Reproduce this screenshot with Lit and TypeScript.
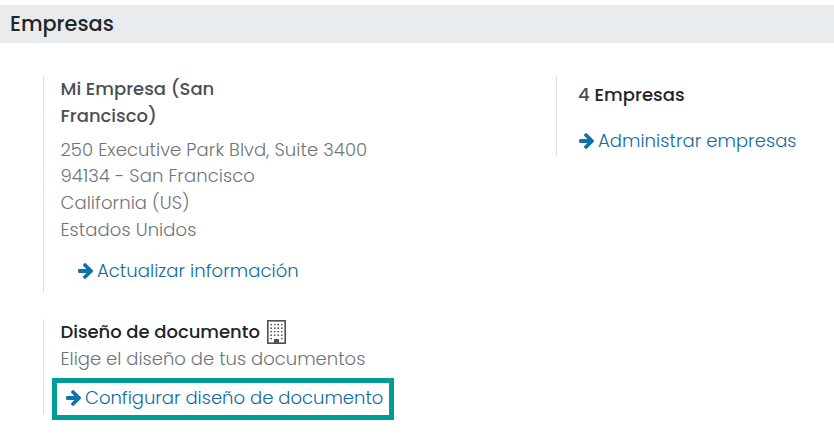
import { LitElement, html, css } from "lit";

const arrow = html`<svg class="arrow" viewBox="64 53 1472 1558" preserveAspectRatio="none" aria-hidden="true">
  <path d="M1536 832q0 53-37 90l-651 652q-39 37-91 37-51 0-90-37l-75-75q-38-38-38-91t38-91l293-293H181q-52 0-84.500-37.500T64 896V768q0-53 32.500-90.500T181 640h704L592 346q-38-36-38-90t38-90l75-75q38-38 90-38 53 0 91 38l651 651q37 35 37 90z"/>
</svg>`;

const columns = [3.2, 6.7, 10.2, 13.7];
const rows = [3.8, 7.3, 10.8, 14.3, 17.8];

const building = html`<svg class="building" viewBox="0 0 19 24" aria-hidden="true">
  <rect x="0.800" y="0.800" width="17.400" height="22.400" fill="none" stroke="#495057" stroke-width="1.600"/>
  ${rows.map((y, r) => columns.map((x, c) => r === 4 && (c === 1 || c === 2) ? "" : html`<svg x=${x} y=${y} width="2" height="2"><rect width="2" height="1.600" fill="#495057"/></svg>`))}
  <path d="M7 24v-5h5v5z" fill="#495057"/>
</svg>`;

class AppRoot extends LitElement {
  static styles = css`
    :host {
      display: block;
      height: 438px;
      overflow: hidden;
      background: #fff;
      color: #6f757b;
      font: 300 18px/26.8px Poppins, "Open Sans", sans-serif;
      white-space: nowrap;
    }
    h2, h3, p { margin: 0; font-size: inherit; font-weight: inherit; }
    h2 {
      height: 38px;
      margin-top: 5px;
      padding-left: 10px;
      box-sizing: border-box;
      background: #e9ecef;
      color: #212529;
      font-size: 20.8px;
      font-weight: 500;
      line-height: 38px;
    }
    .grid {
      display: grid;
      grid-template-columns: 513px 1fr;
      padding: 33px 0 0 43px;
      align-items: start;
    }
    .left { display: grid; gap: 26px; }
    .box { border-left: 1px solid #dee2e6; box-sizing: border-box; }
    .company { height: 217px; padding-left: 16.500px; }
    .document { height: 95px; padding-left: 16.500px; }
    .manage { height: 80px; padding: 6px 0 0 21px; }
    h3 { color: #212529; font-size: 18px; font-weight: 500; }
    .name { color: #495057; }
    .count { color: #495057; }
    .amount { letter-spacing: 0.06px; }
    .address { margin-top: 7px; letter-spacing: 0.07px; }
    .link { display: flex; align-items: center; gap: 4px; color: #106ba3; }
    .update { margin: 14px 0 0 17.500px; letter-spacing: 0.05px; }
    .admin { margin: 19px 0 0 1px; letter-spacing: 0.05px; }
    .title { display: flex; align-items: center; gap: 7px; letter-spacing: -0.03px; }
    .configure {
      width: 342px;
      height: 42px;
      box-sizing: border-box;
      margin: 5.400px 0 0 -8.500px;
      padding: 0 0 2px 9px;
      border: 5px solid #009c95;
    }
    .arrow { width: 15px; height: 16px; fill: #0d74ab; flex: none; }
    .building { width: 19px; height: 24px; flex: none; }
  `;

  render() {
    return html`
      <h2>Empresas</h2>
      <div class="grid">
        <div class="left">
          <section class="box company">
            <h3 class="name">Mi Empresa (San<br>Francisco)</h3>
            <div class="address">
              <p>250 Executive Park Blvd, Suite 3400</p>
              <p>94134 - San Francisco</p>
              <p>California (US)</p>
              <p>Estados Unidos</p>
            </div>
            <div class="link update">${arrow}<span>Actualizar información</span></div>
          </section>
          <section class="box document">
            <h3 class="title"><span>Diseño de documento</span>${building}</h3>
            <p>Elige el diseño de tus documentos</p>
            <div class="link configure">${arrow}<span>Configurar diseño de documento</span></div>
          </section>
        </div>
        <section class="box manage">
          <h3 class="amount"><span class="count">4</span> Empresas</h3>
          <div class="link admin">${arrow}<span>Administrar empresas</span></div>
        </section>
      </div>
    `;
  }
}
customElements.define("app-root", AppRoot);
